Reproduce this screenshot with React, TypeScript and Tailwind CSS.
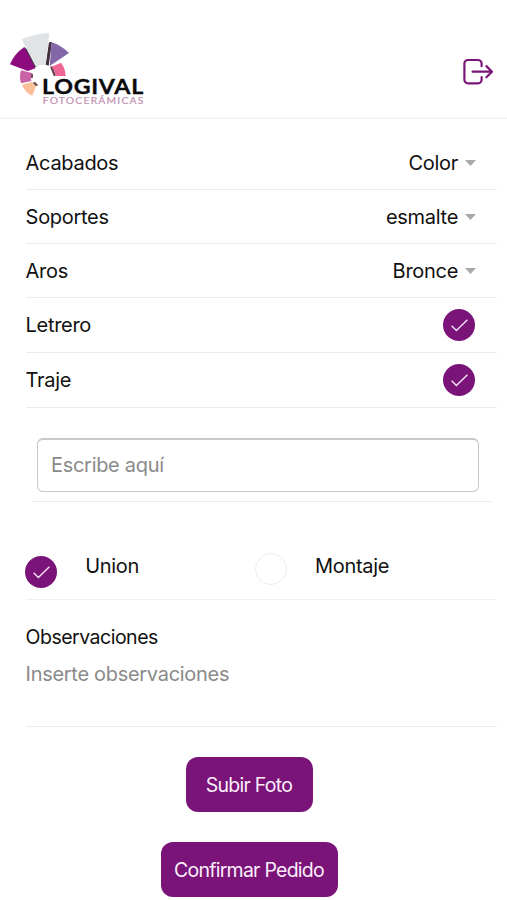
import React, { useState } from "react";

const Logo: React.FC = () => (
  <svg
    width="160"
    height="93"
    viewBox="0 0 480 279"
    role="img"
    aria-label="Logival Fotocerámicas"
  >
    {/* Shadows between the petals */}
    <path d="M72 66L80 72L110 124L103 130Z" fill="#43303f" />
    <path d="M147 52L156 51L146 122L137 119Z" fill="#43303f" />
    <path d="M150 125L158 124L168 152L161 153Z" fill="#6b4250" />
    <path d="M92 143L99 147L99 158L92 160Z" fill="#7d4a6c" />
    <path d="M98 174L105 170L114 181L108 184Z" fill="#6e4b42" />
    {/* Petals */}
    <path d="M65 43Q105 25 148 24L137 119Q117 118 107 125Z" fill="#e1e4e6" />
    <path d="M155 52Q184 61 207 84L149 123Z" fill="#8467a8" />
    <path d="M73 66L106 130L83 138L30 118Q43 86 73 66Z" fill="#8d0b7f" />
    <path d="M183 113Q196 130 197 153L168 153Q165 136 155 125Z" fill="#ef6594" />
    <path d="M63 136L95 144Q90 155 94 168L63 175Q57 155 63 136Z" fill="#cb62a5" />
    <path d="M66 179L96 171Q101 180 108 184L97 212Q75 203 66 179Z" fill="#fbc09a" />
    <text
      x="126"
      y="208"
      fontFamily="Lato, sans-serif"
      fontSize="63"
      fontWeight="700"
      letterSpacing="2"
      fill="#0b0b0b"
      stroke="#0b0b0b"
      strokeWidth="1"
      textLength="306"
      lengthAdjust="spacingAndGlyphs"
    >
      LOGIVAL
    </text>
    <text
      x="128"
      y="237"
      fontFamily="Lato, sans-serif"
      fontSize="26"
      letterSpacing="3"
      fill="#c08fb2"
      stroke="#c08fb2"
      strokeWidth="0.5"
      textLength="306"
      lengthAdjust="spacingAndGlyphs"
    >
      FOTOCERÁMICAS
    </text>
  </svg>
);

const LogoutIcon: React.FC = () => (
  <svg
    width="32"
    height="28"
    viewBox="0 0 32 28"
    fill="none"
    stroke="#7a1478"
    strokeWidth="2.2"
    strokeLinecap="round"
    strokeLinejoin="round"
  >
    <path d="M19.6 8.2V5.6a3.6 3.6 0 0 0-3.6-3.6H6a3.6 3.6 0 0 0-3.6 3.6v16.2A3.6 3.6 0 0 0 6 25.4h10a3.6 3.6 0 0 0 3.6-3.6v-2.6" />
    <path d="M10.6 13.7h19.2M24.4 8.1l5.6 5.6-5.6 5.6" />
  </svg>
);

interface CheckProps {
  checked: boolean;
  label: string;
  onChange: () => void;
}

const Check: React.FC<CheckProps> = ({ checked, label, onChange }) => (
  <button
    role="checkbox"
    aria-checked={checked}
    aria-label={label}
    onClick={onChange}
    className={
      checked
        ? "size-8 shrink-0 rounded-full bg-[#7a1478]"
        : "size-8 shrink-0 rounded-full border border-[#ededed] bg-white"
    }
  >
    {checked && (
      <svg width="32" height="32" viewBox="0 0 32 32" fill="none" stroke="#f6e3f5" strokeWidth="1.4">
        <path d="M8.6 16.8l4.8 4.8L24.4 10.8" />
      </svg>
    )}
  </button>
);

interface SelectRowProps {
  label: string;
  value: string;
}

const SelectRow: React.FC<SelectRowProps> = ({ label, value }) => (
  <div className="flex h-[54px] items-center justify-between border-b border-[#ebebeb] pr-[21px]">
    <span>{label}</span>
    <button className="flex items-center gap-[7px]">
      {value}
      <svg width="11" height="6" viewBox="0 0 11 6">
        <path d="M0 0h11L5.5 6z" fill="#a9a9a9" />
      </svg>
    </button>
  </div>
);

export default function App() {
  const [letrero, setLetrero] = useState(true);
  const [traje, setTraje] = useState(true);
  const [union, setUnion] = useState(true);
  const [montaje, setMontaje] = useState(false);

  return (
    <div className="h-[900px] w-[507px] overflow-hidden bg-white font-[Inter,sans-serif] text-[20px] leading-6 tracking-[-0.3px] text-[#111]">
      <header className="flex h-[119px] items-start justify-between border-b-2 border-[#f5f5f5] pt-[25px] pr-[13px]">
        <Logo />
        <button aria-label="Salir" className="mt-[33px]">
          <LogoutIcon />
        </button>
      </header>

      <main className="pt-[17px] pr-[10px] pl-[25.6px]">
        <SelectRow label="Acabados" value="Color" />
        <SelectRow label="Soportes" value="esmalte" />
        <SelectRow label="Aros" value="Bronce" />

        <div className="flex h-[55px] items-center justify-between border-b border-[#ebebeb] pr-[22px]">
          <span>Letrero</span>
          <Check checked={letrero} label="Letrero" onChange={() => setLetrero(!letrero)} />
        </div>
        <div className="flex h-[55px] items-center justify-between border-b border-[#ebebeb] pr-[22px]">
          <span>Traje</span>
          <Check checked={traje} label="Traje" onChange={() => setTraje(!traje)} />
        </div>

        <div className="mr-[6px] ml-[6px] h-[94px] border-b border-[#ebebeb] pt-[30px] pr-3 pl-[5.4px]">
          <input
            placeholder="Escribe aquí"
            className="h-[54px] w-full rounded-md border border-t-2 border-[#c8c8c8] px-[13px] pb-px outline-none placeholder:text-[#8a8a8a]"
          />
        </div>

        {/* Union / Montaje */}
        <div className="flex h-[98px] items-start border-b border-[#f0f0f0] pt-[51px]">
          <div className="flex w-[229.4px] gap-7">
            <div className="mt-[3px] -ml-[0.4px]">
              <Check checked={union} label="Union" onChange={() => setUnion(!union)} />
            </div>
            <span className="mt-[1px]">Union</span>
          </div>
          <div className="flex gap-7">
            <Check checked={montaje} label="Montaje" onChange={() => setMontaje(!montaje)} />
            <span className="mt-[1px]">Montaje</span>
          </div>
        </div>

        <div className="flex h-[127px] flex-col border-b border-[#ebebeb] pt-[25px]">
          <label htmlFor="observaciones" className="text-[19.5px] tracking-[-0.5px]">
            Observaciones
          </label>
          <textarea
            id="observaciones"
            placeholder="Inserte observaciones"
            className="mt-[13px] h-12 w-full resize-none outline-none placeholder:text-[#8a8a8a]"
          />
        </div>
      </main>

      <div className="flex flex-col items-center gap-[30px] pt-[30px] pr-[9px] text-[19.5px] tracking-[-0.75px] text-[#fbeefb]">
        <button className="h-[55px] w-[127px] rounded-xl bg-[#7a1478] pt-px">Subir Foto</button>
        <button className="h-[55px] w-[177px] rounded-xl bg-[#7a1478] pt-px">Confirmar Pedido</button>
      </div>
    </div>
  );
}
